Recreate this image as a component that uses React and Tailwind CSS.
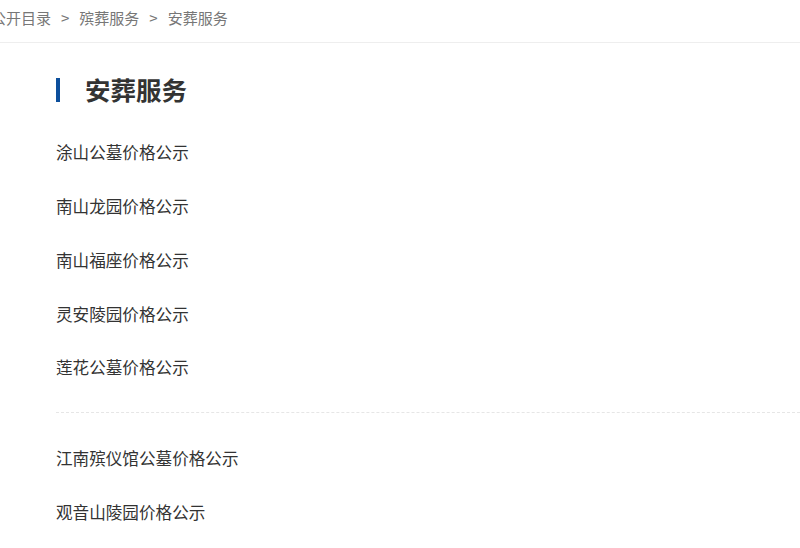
import React from "react";

const groupOne = [
  "涂山公墓价格公示",
  "南山龙园价格公示",
  "南山福座价格公示",
  "灵安陵园价格公示",
  "莲花公墓价格公示",
];

const groupTwo = ["江南殡仪馆公墓价格公示", "观音山陵园价格公示"];

const font = { fontFamily: '"Microsoft YaHei", "Noto Sans CJK SC", sans-serif' };

const App = () => {
  return (
    <div className="min-h-[548px] w-full overflow-hidden bg-white" style={font}>
      {/* breadcrumb */}
      <div className="h-[43px] border-b border-[#eeeeee] pt-[8px]">
        <div className="ml-[-9px] flex items-center text-[15px] leading-[20px] text-[#777777] whitespace-nowrap">
          <span>公开目录</span>
          <span className="px-[10px]">&gt;</span>
          <span>殡葬服务</span>
          <span className="px-[10px]">&gt;</span>
          <span>安葬服务</span>
        </div>
      </div>

      <div className="pl-[56px]">
        {/* title */}
        <div className="mt-[31px] flex h-[30px] items-center">
          <div className="mt-[2px] h-[24px] w-[4px] bg-[#0d4f9c]"></div>
          <h2 className="ml-[25px] text-[25.5px] font-bold leading-[30px] text-[#333333]">
            安葬服务
          </h2>
        </div>

        <ul className="mt-[22px]">
          {groupOne.map((item) => (
            <li
              key={item}
              className="flex h-[53.75px] items-center text-[16.6px] text-[#333333]"
            >
              {item}
            </li>
          ))}
        </ul>

        <div className="mt-[17px] border-t border-dashed border-[#e6e6e6]"></div>

        <ul className="mt-[19px]">
          {groupTwo.map((item) => (
            <li
              key={item}
              className="flex h-[54px] items-center text-[16.6px] text-[#333333]"
            >
              {item}
            </li>
          ))}
        </ul>
      </div>
    </div>
  );
};

export default App;
